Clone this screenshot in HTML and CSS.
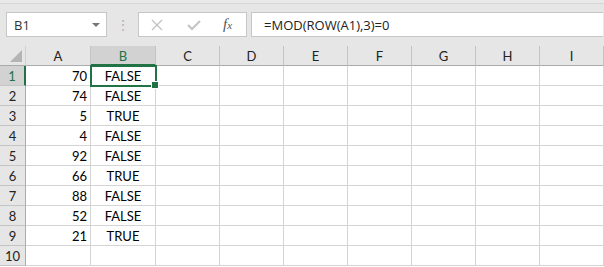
FILE: index.html
```html
<!DOCTYPE html>
<html lang="en">
<head>
    <meta charset="UTF-8">
    <title>MOD ROW</title>
    <link rel="stylesheet" href="styles.css">
</head>
<body>
    <!-- Name box and formula bar -->
    <div class="formula-bar">
        <div class="name-box">
            <span>B1</span>
            <span class="arrow"></span>
        </div>
        <div class="grip">&#8942;</div>
        <div class="fx-box">
            <svg class="icon cancel" width="12" height="12" viewBox="0 0 12 12">
                <path d="M1 1 L11 11 M11 1 L1 11" stroke="#c3c3c3" stroke-width="1.4" fill="none"/>
            </svg>
            <svg class="icon enter" width="14" height="12" viewBox="0 0 14 12">
                <path d="M1 6 L5 10 L13 2" stroke="#c3c3c3" stroke-width="2" fill="none"/>
            </svg>
            <span class="fx">f<i>x</i></span>
        </div>
        <div class="formula">=MOD(ROW(A1),3)=0</div>
    </div>

    <!-- Sheet -->
    <div class="sheet">
        <div class="corner"><span class="tri"></span></div>
        <div class="col-head">A</div>
        <div class="col-head active">B</div>
        <div class="col-head">C</div>
        <div class="col-head">D</div>
        <div class="col-head">E</div>
        <div class="col-head">F</div>
        <div class="col-head">G</div>
        <div class="col-head">H</div>
        <div class="col-head">I</div>
    </div>
    <div class="sheet" id="rows"></div>

    <script>
        const values = [70, 74, 5, 4, 92, 66, 88, 52, 21];
        const rows = document.getElementById("rows");
        let html = "";

        // B column holds =MOD(ROW(A1),3)=0
        for (let r = 1; r <= 10; r++) {
            const v = values[r - 1];
            html += `<div class="row-head${r === 1 ? " active" : ""}">${r}</div>`;
            html += `<div class="cell num">${v === undefined ? "" : v}</div>`;
            let b = "";
            if (v !== undefined) b = r % 3 === 0 ? "TRUE" : "FALSE";
            html += `<div class="cell bool${r === 1 ? " selected" : ""}">${b}</div>`;
            for (let c = 0; c < 7; c++) html += `<div class="cell"></div>`;
        }
        rows.innerHTML = html;
    </script>
</body>
</html>
```

FILE: styles.css
```css
* {
    margin: 0;
    padding: 0;
    box-sizing: border-box;
}

body {
    width: 604px;
    height: 267px;
    overflow: hidden;
    background: #fff;
    font-family: Lato, "Liberation Sans", Arial, sans-serif;
    font-size: 13px;
    color: #000;
}

/* Formula bar */
.formula-bar {
    display: flex;
    align-items: center;
    height: 46px;
    padding: 0 1px 0 6px;
    background: #e6e6e6;
    border-top: 3px solid #e9e9e9;
    box-shadow: inset 0 1px 0 #d5d5d5;
    font-family: "Open Sans", "Noto Sans", sans-serif;
    font-size: 13px;
}

.name-box {
    display: flex;
    align-items: center;
    justify-content: space-between;
    width: 101px;
    height: 25px;
    padding: 0 6px 0 7px;
    background: #fff;
    border: 1px solid #c6c6c6;
    color: #333;
}

.arrow {
    width: 0;
    height: 0;
    border-left: 4px solid transparent;
    border-right: 4px solid transparent;
    border-top: 4px solid #777;
}

.grip {
    width: 31px;
    text-align: center;
    color: #b5b5b5;
    font-size: 14px;
}

.fx-box {
    display: flex;
    align-items: center;
    width: 109px;
    height: 25px;
    padding-left: 12px;
    background: #fff;
    border: 1px solid #c6c6c6;
}

.enter {
    margin-left: 24px;
}

.fx {
    font-family: "Liberation Serif", serif;
    font-style: italic;
    font-size: 15px;
    color: #555;
    margin-left: 22px;
}

.fx i {
    font-size: 11px;
}

.formula {
    flex: 1;
    height: 25px;
    margin-left: 4px;
    padding: 3px 12px;
    background: #fff;
    border: 1px solid #c6c6c6;
    border-right: none;
    color: #222;
}

/* Grid */
.sheet {
    display: grid;
    grid-template-columns: 26px 65px 65px repeat(7, 64px);
    grid-auto-rows: 20px;
}

.corner,
.col-head {
    background: #e6e6e6;
    border-bottom: 1px solid #ababab;
}

.corner {
    position: relative;
    border-right: 1px solid #d0d0d0;
}

.tri {
    position: absolute;
    right: 3px;
    bottom: 3px;
    width: 0;
    height: 0;
    border-left: 12px solid transparent;
    border-bottom: 12px solid #b4b4b4;
}

.col-head {
    text-align: center;
    line-height: 21px;
    border-right: 1px solid #c4c4c4;
    color: #222;
}

.col-head.active {
    background: #d2d2d2;
    color: #217346;
    border-bottom: 2px solid #217346;
}

.row-head {
    background: #e6e6e6;
    border-bottom: 1px solid #c4c4c4;
    border-right: 1px solid #ababab;
    text-align: center;
    line-height: 21px;
    color: #222;
}

.row-head.active {
    background: #d2d2d2;
    color: #217346;
    border-right: 2px solid #217346;
}

.cell {
    border-right: 1px solid #d4d4d4;
    border-bottom: 1px solid #d4d4d4;
    line-height: 21px;
    white-space: nowrap;
}

.num {
    text-align: right;
    padding-right: 3px;
}

.bool {
    text-align: center;
}

.selected {
    position: relative;
    outline: 2px solid #217346;
    outline-offset: -1px;
}

.selected::after {
    content: "";
    position: absolute;
    right: -4px;
    bottom: -4px;
    width: 6px;
    height: 6px;
    background: #217346;
    border: 1px solid #fff;
}
```
